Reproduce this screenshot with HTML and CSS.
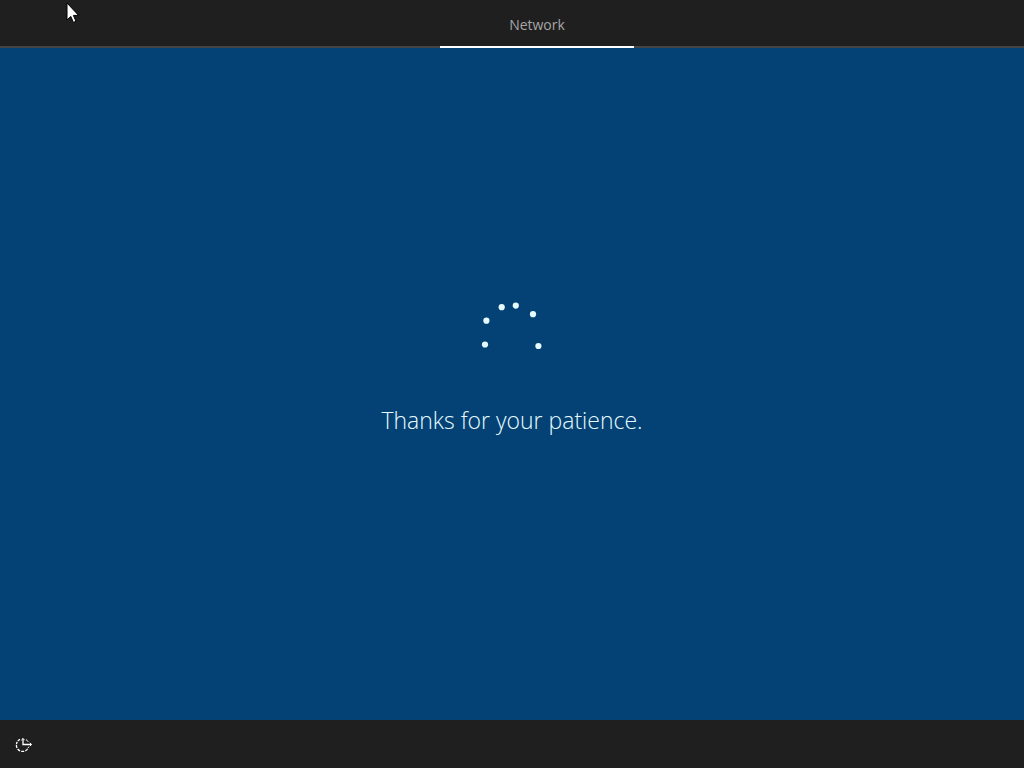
FILE: index.html
```
<!DOCTYPE html>
<html lang="en">
<head>
<meta charset="utf-8">
<title>Network</title>
<link rel="stylesheet" href="styles.css">
</head>
<body>
<div class="setup">
  <header class="topbar">
    <nav class="tabs"><a class="tab" href="#" aria-current="step">Network</a></nav>
  </header>
  <main class="stage">
    <svg class="spinner" width="64" height="56" viewBox="480 298 64 56" fill="#e6fbff" aria-hidden="true">
      <circle cx="485" cy="344.5" r="3.1"/>
      <circle cx="486.4" cy="320.7" r="3.1"/>
      <circle cx="501.7" cy="307.2" r="3.1"/>
      <circle cx="515.8" cy="305.6" r="3.1"/>
      <circle cx="533" cy="314.2" r="3.1"/>
      <circle cx="538.4" cy="346" r="3.1"/>
    </svg>
    <p class="message">Thanks for your patience.</p>
  </main>
  <footer class="bottombar">
    <button class="access" type="button" aria-label="Ease of access">
      <svg width="18" height="16" viewBox="0 0 18 16" fill="none" stroke="#fff" stroke-width="1.3" aria-hidden="true">
        <path d="M5 2.4A6.2 6.2 0 0 0 1.4 8" stroke-dasharray="2.6 1"/>
        <path d="M1.4 8A6.2 6.2 0 0 0 13.6 9.8" stroke-dasharray="3 1.2"/>
        <path d="M8 1.6V7.5H16.4"/>
        <path d="M6.3 3.2 8 1.5 9.7 3.2M14.8 5.8 16.5 7.5 14.8 9.2" stroke-width="1"/>
        <path d="M11 2.6Q12.4 3.4 13.2 4.8" stroke-width="1"/>
      </svg>
    </button>
  </footer>
</div>
<svg class="pointer" width="14" height="22" viewBox="0 0 14 22" aria-hidden="true">
  <path d="M1 1V18L4.8 14.4 7.4 20.4 10 19.3 7.4 13.4H12.6Z" fill="#fff" stroke="#000" stroke-width="1"/>
</svg>
</body>
</html>
```

FILE: styles.css
```
* {
  box-sizing: border-box;
}

body {
  margin: 0;
  background: #1f1f1f;
  font-family: "Open Sans", "Noto Sans", sans-serif;
}

.setup {
  display: flex;
  flex-direction: column;
  min-height: 100vh;
}

.topbar {
  height: 48px;
  padding-left: 50px;
  background: linear-gradient(#444 0 0) bottom / 100% 2px no-repeat #1f1f1f;
}

.tabs {
  display: flex;
  justify-content: center;
  height: 100%;
}

.tab {
  display: flex;
  align-items: center;
  justify-content: center;
  width: 194px;
  padding-top: 4px;
  border-bottom: 2px solid #fff;
  color: #a6a6a6;
  font-size: 14px;
  line-height: 20px;
  text-decoration: none;
}

.stage {
  flex: 1;
  display: flex;
  flex-direction: column;
  align-items: center;
  justify-content: center;
  gap: 48px;
  padding-bottom: 32px;
  background: #044275;
}

.message {
  margin: 0;
  color: #e6fbff;
  font-size: 23px;
  font-weight: 350;
  line-height: 36px;
}

.bottombar {
  display: flex;
  align-items: center;
  height: 48px;
  background: #1f1f1f;
}

.access {
  display: flex;
  align-items: center;
  justify-content: center;
  width: 48px;
  height: 48px;
  padding: 2px 0 0;
  border: 0;
  background: none;
}

.pointer {
  position: absolute;
  left: 66px;
  top: 2px;
}
```
